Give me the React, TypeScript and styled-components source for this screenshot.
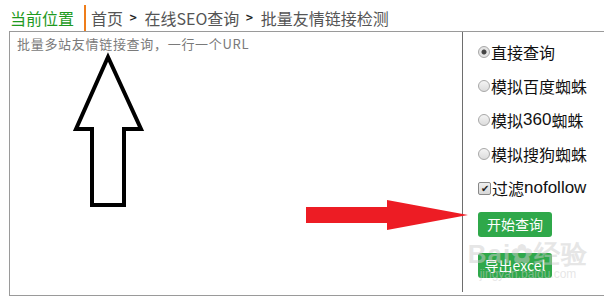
import React from 'react';
import styled, { createGlobalStyle } from 'styled-components';

const GlobalStyle = createGlobalStyle`
  html, body {
    margin: 0;
    padding: 0;
    background: #ffffff;
    overflow: hidden;
  }
  body {
    font-family: "Noto Sans CJK SC", "Noto Sans", sans-serif;
  }
`;

const Page = styled.div`
  position: relative;
  width: 604px;
  height: 303px;
  padding-left: 9px;
  box-sizing: border-box;
`;

const Crumbs = styled.div`
  height: 31px;
  display: flex;
  align-items: flex-end;
  padding-left: 1px;
  font-size: 16px;
  color: #555;
`;

const Here = styled.span`
  color: #1e9a1e;
  padding-right: 10px;
  line-height: 22px;
  margin-bottom: 2px;
`;

const Bar = styled.span`
  width: 2px;
  height: 26px;
  background: #ef7d1a;
  margin-right: 5px;
`;

const Crumb = styled.span`
  line-height: 22px;
  margin-bottom: 2px;
`;

const Sep = styled.span`
  font-family: "DejaVu Sans", sans-serif;
  font-weight: bold;
  font-size: 10px;
  color: #222;
  margin: 0 7px 2px 6px;
  line-height: 22px;
`;

const Box = styled.div`
  display: flex;
  width: 620px;
  height: 265px;
  border: 1px solid #9a9a9a;
  border-right: none;
  box-sizing: border-box;
`;

const Input = styled.div`
  width: 452px;
  box-sizing: border-box;
  padding: 3px 7px;
  font-family: "Noto Sans CJK SC", sans-serif;
  font-size: 13px;
  line-height: 18px;
  letter-spacing: 0.7px;
  color: #7a7a7a;
`;

const Side = styled.div`
  border-left: 1px solid #6e6e6e;
  margin-bottom: 3px;
  padding: 3px 0 0 15px;
  display: flex;
  flex-direction: column;
`;

const Option = styled.label`
  display: flex;
  align-items: center;
  height: 34px;
  font-size: 16px;
  color: #111;
`;

const Radio = styled.span<{ on?: boolean }>`
  width: 10px;
  height: 10px;
  border-radius: 50%;
  border: 1px solid #a8a8a8;
  background: ${({ on }) => (on ? 'radial-gradient(circle, #444 0 2px, #e4e4e4 3px)' : 'linear-gradient(#f4f4f4, #dcdcdc)')};
  margin-right: 1px;
`;

const Check = styled.span`
  width: 11px;
  height: 11px;
  border: 1px solid #888;
  border-radius: 2px;
  background: linear-gradient(#f0f0f0, #d8d8d8);
  margin-right: 1px;
  display: flex;
  align-items: center;
  justify-content: center;
  font-size: 10px;
  line-height: 1;
  color: #222;
`;

const Latin = styled.span`
  font-family: "Liberation Sans", sans-serif;
  font-size: 17px;
`;

const Button = styled.button<{ gap: number }>`
  width: 74px;
  height: 25px;
  border: none;
  border-radius: 3px;
  background: #2fa84a;
  color: #fff;
  font-family: "Noto Sans CJK SC", sans-serif;
  font-size: 14px;
  padding: 0;
  margin-top: ${({ gap }) => gap}px;
  line-height: 25px;
`;

const Mark = styled.div`
  position: absolute;
  left: 463px;
  top: 240px;
  width: 130px;
  pointer-events: none;
  color: rgba(205, 205, 205, 0.5);
  font-family: "Liberation Sans", sans-serif;
  text-align: center;
`;

const MarkBig = styled.div`
  font-size: 26px;
  font-weight: bold;
  line-height: 28px;
  letter-spacing: 1px;
`;

const MarkSmall = styled.div`
  font-size: 12px;
  line-height: 12px;
`;

const Overlay = styled.svg`
  position: absolute;
  left: 0;
  top: 0;
  pointer-events: none;
`;

export default function App() {
  return (
    <Page>
      <GlobalStyle />
      <Crumbs>
        <Here>当前位置</Here>
        <Bar />
        <Crumb>首页</Crumb>
        <Sep>&gt;</Sep>
        <Crumb>在线SEO查询</Crumb>
        <Sep>&gt;</Sep>
        <Crumb>批量友情链接检测</Crumb>
      </Crumbs>
      <Box>
        <Input>批量多站友情链接查询，一行一个URL</Input>
        <Side>
          <Option><Radio on />直接查询</Option>
          <Option><Radio />模拟百度蜘蛛</Option>
          <Option><Radio />模拟<Latin>360</Latin>蜘蛛</Option>
          <Option><Radio />模拟搜狗蜘蛛</Option>
          <Option><Check>✔</Check>过滤<Latin>nofollow</Latin></Option>
          <Button gap={7}>开始查询</Button>
          <Button gap={16}>导出excel</Button>
        </Side>
      </Box>
      <Mark>
        <MarkBig>Bai✿经验</MarkBig>
        <MarkSmall>jingyan.baidu.com</MarkSmall>
      </Mark>
      <Overlay width="604" height="303" viewBox="0 0 604 303">
        <path
          d="M108 57 L76 129 L92 129 L92 205 L124 205 L124 129 L141 129 Z"
          fill="none"
          stroke="#000"
          strokeWidth="4"
          strokeLinejoin="miter"
        />
        <path d="M306 207 L387 207 L387 200 L468 215 L387 230 L387 223 L306 223 Z" fill="#ed1c24" />
      </Overlay>
    </Page>
  );
}
